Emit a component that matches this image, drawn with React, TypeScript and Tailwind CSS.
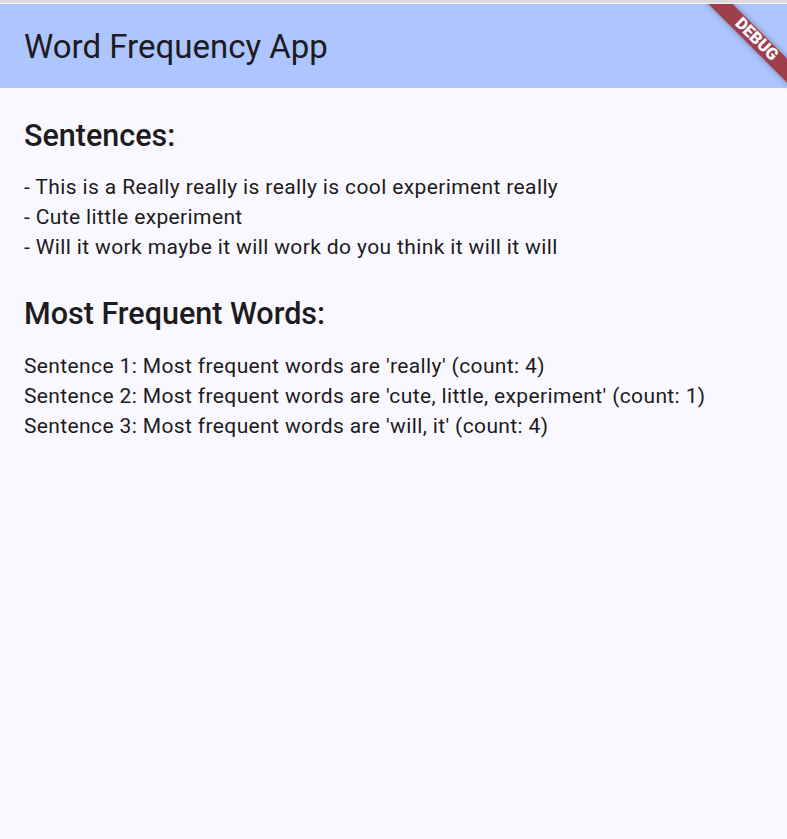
import React from 'react';

const sentences = [
  'This is a Really really is really is cool experiment really',
  'Cute little experiment',
  'Will it work maybe it will work do you think it will it will',
];

const results = [
  "Sentence 1: Most frequent words are 'really' (count: 4)",
  "Sentence 2: Most frequent words are 'cute, little, experiment' (count: 1)",
  "Sentence 3: Most frequent words are 'will, it' (count: 4)",
];

const DebugBanner = () => (
  <div className="pointer-events-none absolute right-0 top-0 h-[100px] w-[100px] overflow-hidden">
    <div className="absolute right-[-26.5px] top-[25px] flex h-[17px] w-[120px] rotate-45 items-center justify-center bg-[#a03e4c] shadow-[0_0_6px_rgba(0,0,0,0.35)]">
      <span className="pl-[6px] text-[16.5px] font-black leading-none text-white">DEBUG</span>
    </div>
  </div>
);

export default function App() {
  return (
    <div className="flex h-[839px] w-[787px] flex-col overflow-hidden bg-white font-['Roboto',sans-serif] text-[#1d1b20]">
      <div className="h-[3px] shrink-0 bg-[#dcdcdc]" />
      <div className="h-px shrink-0 bg-[#f2f2f2]" />
      <div className="relative flex flex-1 flex-col bg-[#f9f8ff]">
        <header className="flex h-[84px] shrink-0 items-center bg-[#aec6ff] px-6">
          <h1 className="text-[33px] font-normal leading-none">Word Frequency App</h1>
        </header>
        <main className="flex flex-col px-6 pt-[30px]">
          <h2 className="text-[30.5px] font-medium leading-[35px]">Sentences:</h2>
          <div className="mt-[19px] flex flex-col text-[21px] leading-[30px] tracking-[0.375px]">
            {sentences.map((s) => (
              <p key={s}>- {s}</p>
            ))}
          </div>
          <h2 className="mt-[34px] text-[30.5px] font-medium leading-[35px]">Most Frequent Words:</h2>
          <div className="mt-[20px] flex flex-col text-[21px] leading-[30px] tracking-[0.375px]">
            {results.map((r) => (
              <p key={r}>{r}</p>
            ))}
          </div>
        </main>
        <DebugBanner />
      </div>
    </div>
  );
}
